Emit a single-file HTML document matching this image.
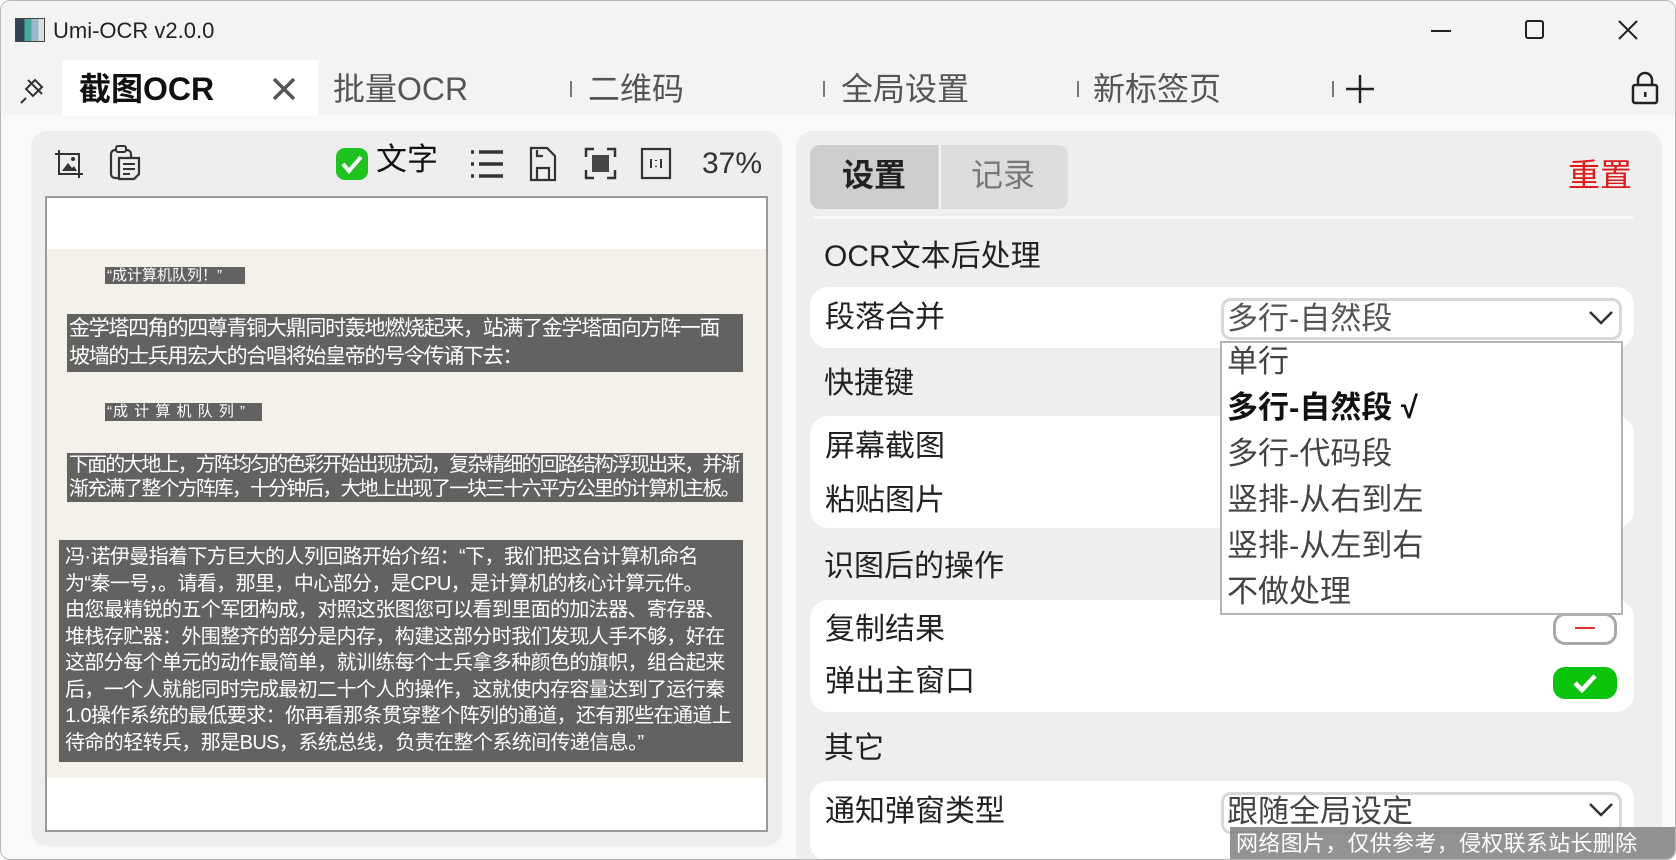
<!DOCTYPE html>
<html><head><meta charset="utf-8"><style>
*{margin:0;padding:0;box-sizing:border-box}
body{width:1676px;height:860px;overflow:hidden;background:#fff;font-family:"Liberation Sans","Noto Sans CJK SC",sans-serif;position:relative;color:#222}
.a{position:absolute;white-space:nowrap}
.win{position:absolute;left:0;top:0;width:1676px;height:860px;border:1px solid #b8b8b8;border-radius:10px;overflow:hidden;background:#f9f9f9}
.tabs{font-size:32px;color:#555;line-height:1}
.sep{position:absolute;width:2px;height:16px;background:#777}
.card{position:absolute;background:#fff;border-radius:18px;left:809px;width:824px}
.lbl{font-size:30px;color:#222;line-height:1}
.hl{position:absolute;background:#626260;color:#fff;font-size:20px;letter-spacing:-1.3px;line-height:28px;padding-left:2px;overflow:hidden;white-space:nowrap}
.dd{font-size:31px;line-height:1;color:#444}
</style></head><body>
<div class="win">
<div class="a" style="left:0;top:0;width:1676px;height:114px;background:#f3f3f3"></div>
<div class="a" style="left:14px;top:17px;width:30px;height:24px;background:linear-gradient(90deg,#345 0 30%,#4a9 30% 55%,#9bc 55% 80%,#ddd 80%);border:1px solid #444"></div>
<div class="a" style="left:52px;top:17px;font-size:22px;color:#222">Umi-OCR v2.0.0</div>
<div class="a" style="left:1430px;top:29px;width:20px;height:2px;background:#222"></div>
<div class="a" style="left:1524px;top:19px;width:19px;height:19px;border:2px solid #222;border-radius:3px"></div>
<svg class="a" style="left:1617px;top:19px" width="20" height="20"><path d="M1 1L19 19M19 1L1 19" stroke="#222" stroke-width="2"/></svg>
<svg class="a" style="left:17px;top:75px" width="28" height="28"><path d="M8 22L3 27M10 4L24 18M17 4L8 13L15 20L24 11Z" stroke="#333" stroke-width="2" fill="none"/></svg>
<div class="a" style="left:61px;top:59px;width:256px;height:56px;background:#fff"></div>
<div class="a tabs" style="left:78px;top:72px;font-weight:bold;color:#111">截图OCR</div>
<svg class="a" style="left:271px;top:76px" width="24" height="24"><path d="M2 2L22 22M22 2L2 22" stroke="#555" stroke-width="3.5"/></svg>
<div class="a tabs" style="left:332px;top:72px">批量OCR</div>
<div class="sep" style="left:569px;top:80px"></div><div class="a tabs" style="left:587px;top:72px">二维码</div>
<div class="sep" style="left:822px;top:80px"></div><div class="a tabs" style="left:840px;top:72px">全局设置</div>
<div class="sep" style="left:1076px;top:80px"></div><div class="a tabs" style="left:1092px;top:72px">新标签页</div>
<div class="sep" style="left:1331px;top:80px"></div>
<svg class="a" style="left:1344px;top:73px" width="30" height="30"><path d="M15 1V29M1 15H29" stroke="#222" stroke-width="2.5"/></svg>
<svg class="a" style="left:1630px;top:70px" width="28" height="34"><rect x="2" y="14" width="24" height="18" rx="2" stroke="#222" stroke-width="2.5" fill="none"/><path d="M7 14V9a7 7 0 0 1 14 0v5" stroke="#222" stroke-width="2.5" fill="none"/><rect x="13" y="21" width="2.5" height="5" fill="#222"/></svg>
<div class="a" style="left:30px;top:130px;width:751px;height:715px;background:#eeeeee;border-radius:16px"></div>
<svg class="a" style="left:52px;top:147px" width="32" height="32"><path d="M6 2V26H30M2 6H26V30" stroke="#333" stroke-width="2" fill="none"/><path d="M9 23L15 15L19 20L21 18L24 23Z" fill="#333"/><circle cx="20" cy="11" r="2" fill="#333"/></svg>
<svg class="a" style="left:107px;top:143px" width="34" height="38"><rect x="3" y="6" width="20" height="28" rx="4" stroke="#333" stroke-width="2.2" fill="none"/><rect x="8" y="2" width="10" height="6" rx="2" stroke="#333" stroke-width="2" fill="#eee"/><path d="M11 14H31V30L26 35H11Z" stroke="#333" stroke-width="2.2" fill="#eee"/><path d="M15 20H27M15 25H27M15 30H22" stroke="#333" stroke-width="2"/></svg>
<svg class="a" style="left:335px;top:147px" width="32" height="32"><rect x="0" y="0" width="32" height="32" rx="9" fill="#1fc21f"/><path d="M7 16L13 23L25 9" stroke="#fff" stroke-width="4" fill="none"/></svg>
<div class="a" style="left:375px;top:142px;font-size:31px;color:#111;line-height:1.1">文字</div>
<svg class="a" style="left:469px;top:147px" width="34" height="32"><path d="M1 4H4M9 4H33M1 16H4M9 16H33M1 28H4M9 28H33" stroke="#333" stroke-width="3.5"/></svg>
<svg class="a" style="left:528px;top:145px" width="28" height="36"><path d="M2 2H18L26 10V34H2Z M8 34V22H20V34 M8 4V10H14" stroke="#333" stroke-width="2.2" fill="none"/></svg>
<svg class="a" style="left:583px;top:146px" width="33" height="33"><path d="M2 10V2H10M23 2H31V10M31 23V31H23M10 31H2V23" stroke="#333" stroke-width="2.5" fill="none"/><rect x="8" y="8" width="17" height="17" fill="#444"/></svg>
<svg class="a" style="left:639px;top:146px" width="32" height="33"><rect x="2" y="2" width="28" height="29" stroke="#333" stroke-width="2.2" fill="none"/><path d="M11 12V21M21 12V21M16 13V14M16 19V20" stroke="#333" stroke-width="2"/></svg>
<div class="a" style="left:701px;top:146px;font-size:30px;color:#333">37%</div>
<div class="a" style="left:44px;top:195px;width:723px;height:636px;background:#fff;border:2px solid #9a9a9a"></div>
<div class="a" style="left:46px;top:248px;width:719px;height:529px;background:#f4f1ea"></div>
<div class="hl" style="left:104px;top:266px;width:140px;height:17px;font-size:15px;letter-spacing:0;line-height:17px;padding-left:2px">“成计算机队列！”</div>
<div class="hl" style="left:66px;top:313px;width:676px;height:58px;padding-top:1px;font-size:21px">金学塔四角的四尊青铜大鼎同时轰地燃烧起来，站满了金学塔面向方阵一面<br>坡墙的士兵用宏大的合唱将始皇帝的号令传诵下去：</div>
<div class="hl" style="left:104px;top:402px;width:157px;height:18px;font-size:15px;letter-spacing:1px;line-height:18px">“成 计 算 机 队 列 ”</div>
<div class="hl" style="left:66px;top:452px;width:676px;height:49px;line-height:24px;font-size:20px;letter-spacing:-1.9px">下面的大地上，方阵均匀的色彩开始出现扰动，复杂精细的回路结构浮现出来，并渐<br>渐充满了整个方阵库，十分钟后，大地上出现了一块三十六平方公里的计算机主板。</div>
<div class="hl" style="left:58px;top:539px;width:684px;height:222px;line-height:26.5px;padding-top:4px;padding-left:6px;letter-spacing:-0.6px">冯·诺伊曼指着下方巨大的人列回路开始介绍：“下，我们把这台计算机命名<br>为“秦一号，。请看，那里，中心部分，是CPU，是计算机的核心计算元件。<br>由您最精锐的五个军团构成，对照这张图您可以看到里面的加法器、寄存器、<br>堆栈存贮器：外围整齐的部分是内存，构建这部分时我们发现人手不够，好在<br>这部分每个单元的动作最简单，就训练每个士兵拿多种颜色的旗帜，组合起来<br>后，一个人就能同时完成最初二十个人的操作，这就使内存容量达到了运行秦<br>1.0操作系统的最低要求：你再看那条贯穿整个阵列的通道，还有那些在通道上<br>待命的轻转兵，那是BUS，系统总线，负责在整个系统间传递信息。”</div>
<div class="a" style="left:795px;top:130px;width:866px;height:740px;background:#eeeeee;border-radius:16px"></div>
<div class="a" style="left:809px;top:144px;width:258px;height:64px;background:#dcdcdc;border-radius:10px"></div>
<div class="a" style="left:809px;top:144px;width:128px;height:64px;background:#cdcdcd;border-radius:10px 0 0 10px"></div>
<div class="a" style="left:938px;top:144px;width:2px;height:64px;background:#f2f2f2"></div>
<div class="a" style="left:841px;top:157px;font-size:32px;font-weight:bold;color:#222;line-height:1.1">设置</div>
<div class="a" style="left:970px;top:157px;font-size:32px;color:#777;line-height:1.1">记录</div>
<div class="a" style="left:1567px;top:157px;font-size:32px;color:#e01818;line-height:1.1">重置</div>
<div class="a" style="left:812px;top:215px;width:820px;height:3px;background:#fafafa"></div>
<div class="a lbl" style="left:823px;top:241px">OCR文本后处理</div>
<div class="card" style="top:286px;height:61px"></div>
<div class="a lbl" style="left:824px;top:302px">段落合并</div>
<div class="a" style="left:1220px;top:297px;width:401px;height:42px;border:3px solid #d8d8d8;border-radius:10px;background:#fff"></div>
<div class="a dd" style="left:1226px;top:302px;color:#555">多行-自然段</div>
<svg class="a" style="left:1587px;top:308px" width="26" height="18"><path d="M2 3L13 14L24 3" stroke="#333" stroke-width="2.5" fill="none"/></svg>
<div class="a lbl" style="left:823px;top:368px">快捷键</div>
<div class="card" style="top:415px;height:112px"></div>
<div class="a lbl" style="left:824px;top:431px">屏幕截图</div>
<div class="a lbl" style="left:824px;top:485px">粘贴图片</div>
<div class="a lbl" style="left:823px;top:551px">识图后的操作</div>
<div class="card" style="top:599px;height:112px"></div>
<div class="a lbl" style="left:824px;top:614px">复制结果</div>
<div class="a lbl" style="left:824px;top:666px">弹出主窗口</div>
<div class="a" style="left:1552px;top:612px;width:64px;height:32px;border:3px solid #a8a8a8;border-radius:12px;background:#fff"></div>
<div class="a" style="left:1574px;top:626px;width:20px;height:2px;background:#e03030"></div>
<div class="a" style="left:1552px;top:666px;width:64px;height:32px;border-radius:12px;background:#0bc40b"></div>
<svg class="a" style="left:1571px;top:671px" width="26" height="22"><path d="M3 11L10 18L23 4" stroke="#fff" stroke-width="4.5" fill="none"/></svg>
<div class="a lbl" style="left:823px;top:733px">其它</div>
<div class="card" style="top:780px;height:80px"></div>
<div class="a lbl" style="left:824px;top:796px">通知弹窗类型</div>
<div class="a" style="left:1220px;top:791px;width:401px;height:42px;border:3px solid #d8d8d8;border-radius:10px;background:#fff"></div>
<div class="a dd" style="left:1226px;top:795px;color:#444">跟随全局设定</div>
<svg class="a" style="left:1587px;top:800px" width="26" height="18"><path d="M2 3L13 14L24 3" stroke="#333" stroke-width="2.5" fill="none"/></svg>
<div class="a" style="left:1219px;top:340px;width:403px;height:274px;background:#fff;border:2px solid #b4b4b4"></div>
<div class="a dd" style="left:1226px;top:345px">单行</div>
<div class="a dd" style="left:1226px;top:391px;font-weight:bold;color:#111">多行-自然段 √</div>
<div class="a dd" style="left:1226px;top:437px">多行-代码段</div>
<div class="a dd" style="left:1226px;top:483px">竖排-从右到左</div>
<div class="a dd" style="left:1226px;top:529px">竖排-从左到右</div>
<div class="a dd" style="left:1226px;top:575px">不做处理</div>
<div class="a" style="left:1229px;top:826px;width:447px;height:34px;background:rgba(128,128,128,.85);color:#fff;font-size:22px;line-height:34px;padding-left:6px;letter-spacing:0.3px">网络图片，仅供参考，侵权联系站长删除</div>
</div>
</body></html>
